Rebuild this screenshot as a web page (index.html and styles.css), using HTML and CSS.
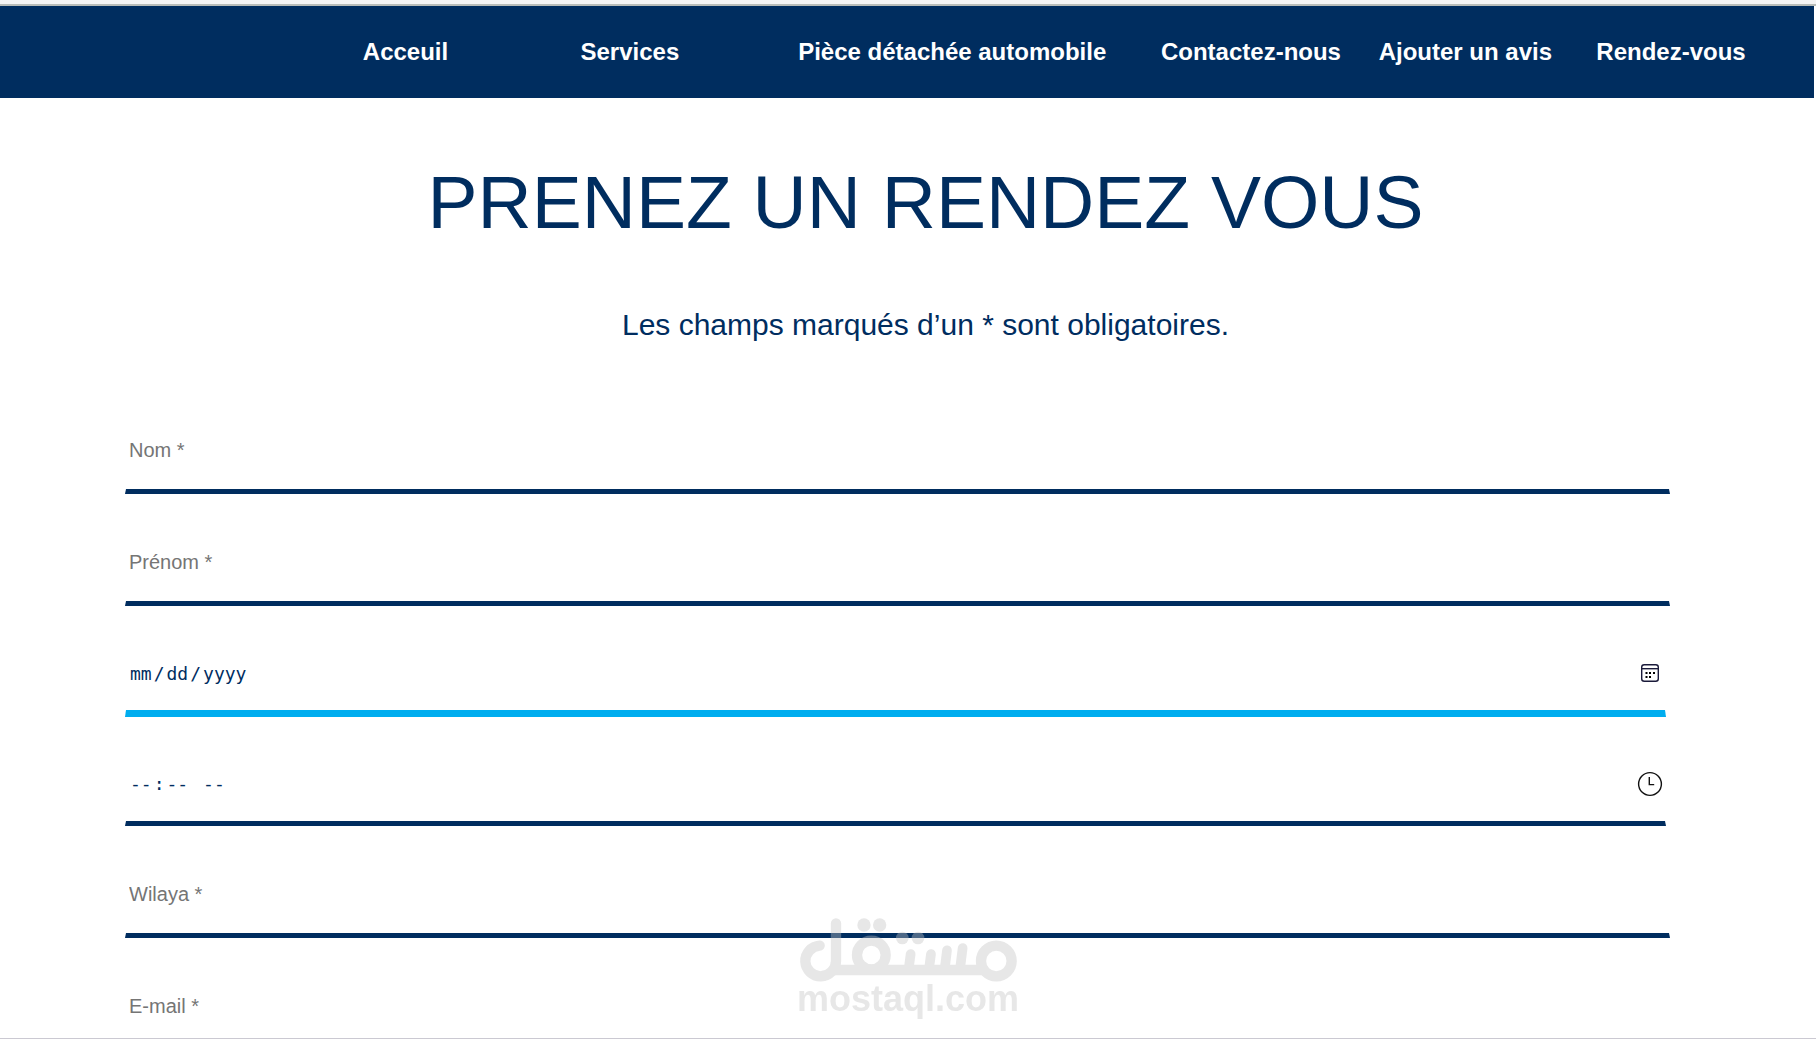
FILE: index.html
```html
<!DOCTYPE html>
<html lang="fr">
  <head>
    <meta charset="UTF-8">
    <meta name="viewport" content="width=device-width, initial-scale=1.0">
    <title>Rendez-vous</title>
    <link rel="stylesheet" href="styles.css">
  </head>
  <body>
    <div class="top-strip"></div>
    <header>
      <nav class="menu">
        <a class="first" href="#">Acceuil</a>
        <a href="#">Services</a>
        <a href="#">Pièce détachée automobile</a>
        <a href="#">Contactez-nous</a>
        <a href="#">Ajouter un avis</a>
        <a href="#">Rendez-vous</a>
      </nav>
    </header>

    <main>
      <h1>PRENEZ UN RENDEZ VOUS</h1>
      <p class="note">Les champs marqués d’un * sont obligatoires.</p>

      <form class="rdv-form">
        <input class="field" type="text" name="nom" placeholder="Nom *" aria-label="Nom" required>
        <input class="field" type="text" name="prenom" placeholder="Prénom *" aria-label="Prénom" required>
        <div class="picker">
          <input class="field date active" type="date" name="date" aria-label="Date" required>
          <svg class="icon" width="26" height="26" viewBox="0 0 26 26" fill="none" stroke="#1a1a3a">
            <rect x="4.7" y="4.7" width="16.6" height="16.6" rx="2.5" stroke-width="1.4"/>
            <path d="M5 8.7h16" stroke-width="1.4"/>
            <path d="M8.5 13h2M12 13h2M16 13h2M8.5 17h2M12 17h2" stroke="#000" stroke-width="2"/>
          </svg>
        </div>
        <div class="picker">
          <input class="field time" type="time" name="heure" aria-label="Heure" required>
          <svg class="icon" width="26" height="26" viewBox="0 0 26 26" fill="none" stroke="#111">
            <circle cx="13" cy="13" r="11.4" stroke-width="1.4"/>
            <path d="M12.3 6v7.6h4.9" stroke-width="1.4"/>
          </svg>
        </div>
        <input class="field" type="text" name="wilaya" placeholder="Wilaya *" aria-label="Wilaya" required>
        <input class="field" type="email" name="email" placeholder="E-mail *" aria-label="E-mail" required>
      </form>
    </main>

    <svg class="watermark" width="256" height="130" viewBox="0 0 256 130">
      <g transform="scale(0.3333)" fill="none" stroke="#c3c3c3" stroke-width="31" stroke-linecap="round">
        <path d="M119 137a46 46 0 1 0 49 46V70"/>
        <path d="M160 210H605" stroke-linecap="butt"/>
        <circle cx="274" cy="165" r="43"/>
        <circle cx="649" cy="183" r="46"/>
        <path d="M392 162L387 200M453 162L448 200M501 151L495 200M548 144L541 200" stroke-width="29"/>
        <g fill="#c3c3c3" stroke="none">
          <circle cx="252" cy="75" r="20"/>
          <circle cx="299" cy="75" r="20"/>
          <circle cx="367" cy="114" r="19"/>
          <circle cx="414" cy="114" r="19"/>
        </g>
      </g>
      <text x="128" y="111" text-anchor="middle" fill="#c3c3c3">mostaql.com</text>
    </svg>
  </body>
</html>
```
FILE: styles.css
```css
body {
  font-family: "Liberation Sans", Arial, sans-serif;
  margin: 0;
  height: 100vh;
  box-sizing: border-box;
  display: flex;
  flex-direction: column;
  overflow: hidden;
  background-color: #fff;
  border-bottom: 1px solid #cbc9d2;
  color: #002d5f;
}

.top-strip {
  flex: none;
  height: 4px;
  background-color: #f4f4f4;
  border-bottom: 2px solid #b9bdb9;
}

header {
  flex: none;
  background-color: #002d5f;
  margin-right: 2px;
}

.menu {
  display: grid;
  grid-template-columns: 20fr 12fr 12fr 20fr 12fr 12fr 12fr;
  align-items: center;
  height: 92px;
}

.menu a {
  color: #fff;
  font-size: 24px;
  font-weight: bold;
  text-decoration: none;
  white-space: nowrap;
}

.menu .first {
  grid-column: 2;
}

main {
  flex: 1;
  min-height: 0;
  overflow: hidden;
}

h1 {
  margin: 61px 0 0 35px;
  font-size: 75px;
  font-weight: normal;
  line-height: 86px;
  text-align: center;
}

.note {
  margin: 62px 0 0 35px;
  font-size: 30px;
  line-height: 36px;
  text-align: center;
}

.rdv-form {
  display: flex;
  flex-direction: column;
  gap: 27px;
  width: 85%;
  margin: 66px 0 0 125px;
}

.field {
  box-sizing: border-box;
  width: calc(100% + 1px);
  height: 85px;
  padding: 4px 3px 2px;
  border: 1px solid transparent;
  border-bottom: 5px solid #002d5f;
  outline: none;
  background: none;
  font-family: inherit;
  font-size: 20px;
  color: #002d5f;
}

.field::placeholder {
  color: #757575;
}

.picker {
  position: relative;
  display: flex;
  width: calc(100% - 3px);
}

.picker .field {
  width: 100%;
  font-family: "DejaVu Sans Mono", monospace;
  font-size: 18px;
}

.picker .date {
  height: 84px;
}

.picker .time {
  height: 82px;
}

.picker .active {
  border-bottom: 7px solid #00adef;
}

.field::-webkit-datetime-edit-text {
  padding: 0 1px;
}

/* l'icône native est remplacée par le svg */
.field::-webkit-calendar-picker-indicator {
  opacity: 0;
}

.icon {
  position: absolute;
  top: 27px;
  right: 3px;
  pointer-events: none;
}

.watermark {
  position: fixed;
  left: 50%;
  bottom: 9px;
  transform: translateX(-50%);
  opacity: 0.4;
  pointer-events: none;
}

.watermark text {
  font-family: "Liberation Sans", Arial, sans-serif;
  font-size: 36px;
  font-weight: bold;
}
```
